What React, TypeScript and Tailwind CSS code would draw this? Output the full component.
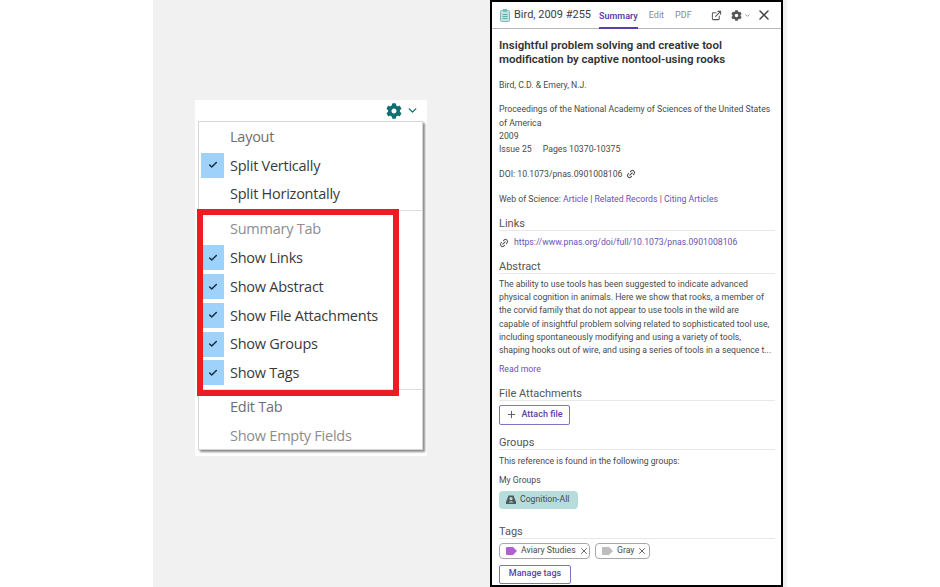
import { Check, ExternalLink, Link2, Plus, X, ChevronDown } from "lucide-react";
import { FaCog } from "react-icons/fa";

const font = "font-['Open_Sans',sans-serif]";
const panelFont = "font-['Roboto',sans-serif]";

function MenuItem({ label, checked }: { label: string; checked?: boolean }) {
  return (
    <div className="flex items-center h-[28.75px] pl-[2px]">
      <div className={`w-[23px] h-[25px] flex items-center justify-center ${checked ? "bg-[#9ed2fa]" : ""}`}>
        {checked && <Check size={10} strokeWidth={3.5} className="text-[#1b2b3c]" />}
      </div>
      <span className="ml-[6px] text-[14.5px] text-[#3a3a3a] tracking-[-0.25px]">{label}</span>
    </div>
  );
}

function MenuHeading({ label, light }: { label: string; light?: boolean }) {
  return (
    <div className={`flex items-center h-[29px] pl-[31px] text-[14.5px] tracking-[-0.25px] ${light ? "text-[#8d8d8d]" : "text-[#6e6e6e] font-medium"}`}>
      {label}
    </div>
  );
}

function SettingsShot() {
  return (
    <div className="relative w-[232px] h-[356px] bg-white">
      <div className="h-[21px] flex items-center justify-end gap-[4px] pr-[8px]">
        <FaCog size={16} className="text-[#0f6f73]" />
        <ChevronDown size={13} strokeWidth={2.5} className="text-[#0f6f73]" />
      </div>
      <div className="ml-[3px] w-[225px] h-[329px] bg-white border border-[#d5d5d5] shadow-[2px_2px_2px_rgba(0,0,0,0.45)]">
        <MenuHeading label="Layout" />
        <MenuItem label="Split Vertically" checked />
        <MenuItem label="Split Horizontally" />
        <div className="h-px bg-[#dddddd] mt-[1px] mb-[4px]" />
        <MenuHeading label="Summary Tab" light />
        <MenuItem label="Show Links" checked />
        <MenuItem label="Show Abstract" checked />
        <MenuItem label="Show File Attachments" checked />
        <MenuItem label="Show Groups" checked />
        <MenuItem label="Show Tags" checked />
        <div className="h-px bg-[#dddddd] mt-[2px] mb-[2px]" />
        <MenuHeading label="Edit Tab" />
        <MenuHeading label="Show Empty Fields" light />
      </div>
      <div className="absolute left-[2px] top-[109px] w-[202px] h-[187px] border-[6px] border-[#ed1c24]" />
    </div>
  );
}

function SectionTitle({ label }: { label: string }) {
  return <div className="text-[11px] leading-[13px] text-[#555] border-b border-[#e8e8e8]">{label}</div>;
}

function TagIcon({ color }: { color: string }) {
  return (
    <svg width="11" height="8" viewBox="0 0 11 8" className="shrink-0">
      <path d="M1 0 H7 L11 4 L7 8 H1 Q0 8 0 7 V1 Q0 0 1 0 Z" fill={color} />
    </svg>
  );
}

function ClipIcon() {
  return (
    <svg width="10" height="13" viewBox="0 0 10 13">
      <rect x="0.5" y="1.5" width="9" height="11" rx="1" fill="#c3e2e2" stroke="#7dbcbc" />
      <rect x="3" y="0" width="4" height="3" fill="#7dbcbc" />
      <path d="M2.5 5.5 H7.5 M2.5 7.5 H7.5 M2.5 9.5 H7.5" stroke="#6aa9a9" strokeWidth="1" />
    </svg>
  );
}

function GroupIcon() {
  return (
    <svg width="10" height="9" viewBox="0 0 10 9">
      <path d="M2.5 0.5 H7.5 L10 7 V9 H0 V7 Z" fill="#4d5a5a" />
      <circle cx="5" cy="3.6" r="1.6" fill="#b7dcdc" />
      <path d="M2.5 7.5 Q5 5 7.5 7.5 Z" fill="#b7dcdc" />
    </svg>
  );
}

function ReferencePanel() {
  const link = "text-[#6a52b5]";
  return (
    <div className={`w-[293px] h-[587px] bg-white border-2 border-black overflow-hidden ${panelFont}`}>
      <div className="h-[27px] flex items-center border-b border-[#b5b5b5] pl-[8px] whitespace-nowrap">
        <ClipIcon />
        <span className="ml-[4px] text-[11px] text-[#3d3d3d]">Bird, 2009 #255</span>
        <span className="ml-[8px] h-[27px] leading-[28px] text-[9px] font-semibold text-[#5b3fa8] border-b-2 border-[#5b3fa8]">Summary</span>
        <span className="ml-[11px] pt-[1px] text-[9px] text-[#8a8a8a]">Edit</span>
        <span className="ml-[11px] pt-[1px] text-[9px] text-[#8a8a8a]">PDF</span>
        <div className="ml-auto flex items-center pr-[9px]">
          <ExternalLink size={11} strokeWidth={2.2} className="text-[#555]" />
          <FaCog size={11} className="ml-[9px] text-[#555]" />
          <ChevronDown size={7} strokeWidth={2.5} className="ml-[2px] text-[#777]" />
          <X size={16} strokeWidth={2.2} className="ml-[5px] text-[#444]" />
        </div>
      </div>
      <div className="pl-[7px] pr-[6px] text-[#4a4a4a] text-[8.7px] leading-[13.33px]">
        <h1 className="pt-[9px] text-[11.5px] leading-[14px] font-semibold text-[#333]">
          Insightful problem solving and creative tool
          <br />modification by captive nontool-using rooks
        </h1>
        <p className="mt-[13px]">Bird, C.D. &amp; Emery, N.J.</p>
        <p className="mt-[11px] whitespace-nowrap">
          Proceedings of the National Academy of Sciences of the United States
          <br />of America
          <br />2009
          <br />Issue 25 <span className="ml-[9px]">Pages 10370-10375</span>
        </p>
        <p className="mt-[11px] flex items-center">
          DOI: 10.1073/pnas.0901008106 <Link2 size={10} strokeWidth={2.5} className="ml-[4px] -rotate-45" />
        </p>
        <p className="mt-[12px]">
          Web of Science: <span className={link}>Article</span> | <span className={link}>Related Records</span> | <span className={link}>Citing Articles</span>
        </p>
        <div className="mt-[11px]"><SectionTitle label="Links" /></div>
        <div className="mt-[5px] flex items-center">
          <Link2 size={10} strokeWidth={2.5} className="-rotate-45 text-[#555]" />
          <span className={`ml-[5px] ${link}`}>https://www.pnas.org/doi/full/10.1073/pnas.0901008106</span>
        </div>
        <div className="mt-[10px]"><SectionTitle label="Abstract" /></div>
        <p className="mt-[4px] whitespace-nowrap">
          The ability to use tools has been suggested to indicate advanced<br />
          physical cognition in animals. Here we show that rooks, a member of<br />
          the corvid family that do not appear to use tools in the wild are<br />
          capable of insightful problem solving related to sophisticated tool use,<br />
          including spontaneously modifying and using a variety of tools,<br />
          shaping hooks out of wire, and using a series of tools in a sequence t...
        </p>
        <p className={`mt-[5px] ${link}`}>Read more</p>
        <div className="mt-[11px]"><SectionTitle label="File Attachments" /></div>
        <button className="mt-[4px] h-[20px] w-[71px] flex items-center justify-center gap-[4px] border border-[#8371c4] rounded-[2px] text-[9px] font-medium text-[#5b3fa8]">
          <Plus size={11} className="text-[#555]" /> Attach file
        </button>
        <div className="mt-[11px]"><SectionTitle label="Groups" /></div>
        <p className="mt-[5px]">This reference is found in the following groups:</p>
        <p className="mt-[6px]">My Groups</p>
        <div className="mt-[3px] w-[79px] h-[18px] rounded-[4px] bg-[#b7dcdc] flex items-center pl-[7px]">
          <GroupIcon />
          <span className="ml-[4px]">Cognition-All</span>
        </div>
        <div className="mt-[16px]"><SectionTitle label="Tags" /></div>
        <div className="mt-[4px] flex gap-[5px] whitespace-nowrap">
          <div className="h-[16px] w-[91px] flex items-center pl-[6px] border border-[#a8a8a8] rounded-[4px]">
            <TagIcon color="#b060d0" />
            <span className="ml-[4px]">Aviary Studies</span>
            <X size={10} className="ml-[3px]" />
          </div>
          <div className="h-[16px] w-[55px] flex items-center pl-[6px] border border-[#a8a8a8] rounded-[4px]">
            <TagIcon color="#bdbdbd" />
            <span className="ml-[4px]">Gray</span>
            <X size={10} className="ml-[3px]" />
          </div>
        </div>
        <button className="mt-[6px] h-[19px] w-[72px] border border-[#8371c4] rounded-[2px] text-[9px] font-medium text-[#5b3fa8]">
          Manage tags
        </button>
      </div>
    </div>
  );
}

export default function App() {
  return (
    <div className={`w-[940px] h-[587px] bg-white flex justify-start ${font}`}>
      <div className="ml-[153px] w-[634px] h-full bg-[#f1f1f1] flex">
        <div className="ml-[42px] mt-[100px]"><SettingsShot /></div>
        <div className="ml-[63px]"><ReferencePanel /></div>
      </div>
    </div>
  );
}
